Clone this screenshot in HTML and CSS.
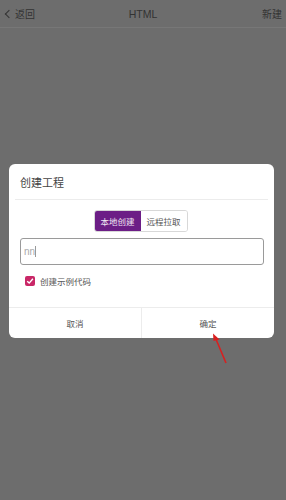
FILE: index.html
```html
<!DOCTYPE html>
<html>
<head>
<meta charset="utf-8">
<link rel="stylesheet" href="styles.css">
</head>
<body>
<div class="header">
  <div class="back"><span class="chev"></span>返回</div>
  <div class="title">HTML</div>
  <div class="new">新建</div>
</div>
<div class="overlay">
  <div class="dialog">
    <div class="dtitle">创建工程</div>
    <div class="sep"></div>
    <div class="seg-wrap">
      <div class="seg">
        <div class="seg-item active">本地创建</div>
        <div class="seg-item">远程拉取</div>
      </div>
    </div>
    <div class="input"><span class="val">nn</span><span class="caret"></span></div>
    <div class="check-row">
      <span class="check"><svg width="8" height="8" viewBox="0 0 8 8"><path d="M1.2 4.2 L3.2 6.1 L6.9 1.8" fill="none" stroke="#fff" stroke-width="1.4"/></svg></span>
      <span class="check-label">创建示例代码</span>
    </div>
    <div class="footer">
      <div class="btn">取消</div>
      <div class="btn">确定</div>
    </div>
  </div>
</div>
<svg class="arrow" width="30" height="40" viewBox="0 0 30 40">
  <path d="M16 30 L5.5 5" stroke="#d82020" stroke-width="1.6" fill="none"/>
  <path d="M3 0.5 L9.5 6.5 L3.5 8 Z" fill="#d82020"/>
</svg>
</body>
</html>
```
FILE: styles.css
```css
* { box-sizing: border-box; }
html, body { margin: 0; padding: 0; }
body {
  width: 286px;
  height: 500px;
  background: #6d6d6d;
  font-family: "Noto Sans CJK SC", "Noto Sans", sans-serif;
  position: relative;
  overflow: hidden;
}
.header {
  height: 28px;
  display: flex;
  align-items: center;
  justify-content: space-between;
  padding: 0 4px 0 4px;
  border-bottom: 1px solid #777;
  color: #333;
  font-size: 10px;
  position: relative;
}
.back { display: flex; align-items: center; gap: 2px; }
.chev {
  width: 6px; height: 6px;
  border-left: 1.2px solid #333;
  border-bottom: 1.2px solid #333;
  transform: rotate(45deg);
  margin-left: 2px;
  margin-right: 1px;
}
.title {
  position: absolute;
  left: 0; right: 0;
  text-align: center;
  font-family: "Liberation Sans", Arial, sans-serif;
  font-size: 10.5px;
  pointer-events: none;
}
.overlay {
  position: absolute;
  inset: 0;
  display: flex;
  align-items: center;
  justify-content: center;
  padding-right: 3px;
  padding-top: 2px;
}
.dialog {
  width: 265px;
  height: 174px;
  background: #fff;
  border-radius: 6px;
  display: flex;
  flex-direction: column;
  overflow: hidden;
}
.dtitle {
  height: 35px;
  display: flex;
  align-items: center;
  padding-left: 11px;
  font-size: 11px;
  color: #444;
}
.sep {
  height: 1px;
  background: #ececec;
  margin: 0 6px;
}
.seg-wrap {
  display: flex;
  justify-content: center;
  margin-top: 10px;
  padding-right: 2px;
}
.seg {
  display: flex;
  border: 1px solid #d8d8d8;
  border-radius: 3px;
  overflow: hidden;
  height: 22px;
}
.seg-item {
  width: 46px;
  display: flex;
  align-items: center;
  justify-content: center;
  font-size: 8.5px;
  color: #555;
  background: #fff;
}
.seg-item.active {
  background: #6c1e86;
  color: #f0e6f2;
}
.input {
  margin: 6px 10px 0 11px;
  height: 27px;
  border: 1.5px solid #9a9a9a;
  border-radius: 3px;
  display: flex;
  align-items: center;
  padding-left: 3px;
}
.val { font-size: 10px; color: #aaa; font-family: "Liberation Sans", sans-serif; }
.caret { width: 1px; height: 11px; background: #999; }
.check-row {
  display: flex;
  align-items: center;
  margin-top: 10px;
  padding-left: 16px;
  height: 11px;
}
.check {
  width: 10px; height: 10px;
  background: #c92767;
  border-radius: 2px;
  display: flex;
  align-items: center;
  justify-content: center;
}
.check-label {
  margin-left: 5px;
  font-size: 8.5px;
  color: #555;
}
.footer {
  margin-top: auto;
  height: 31px;
  border-top: 1px solid #ececec;
  display: flex;
}
.btn {
  flex: 1;
  display: flex;
  align-items: center;
  justify-content: center;
  font-size: 8.5px;
  color: #555;
}
.btn + .btn { border-left: 1px solid #ececec; }
.arrow {
  position: absolute;
  left: 210px;
  top: 333px;
}
```
